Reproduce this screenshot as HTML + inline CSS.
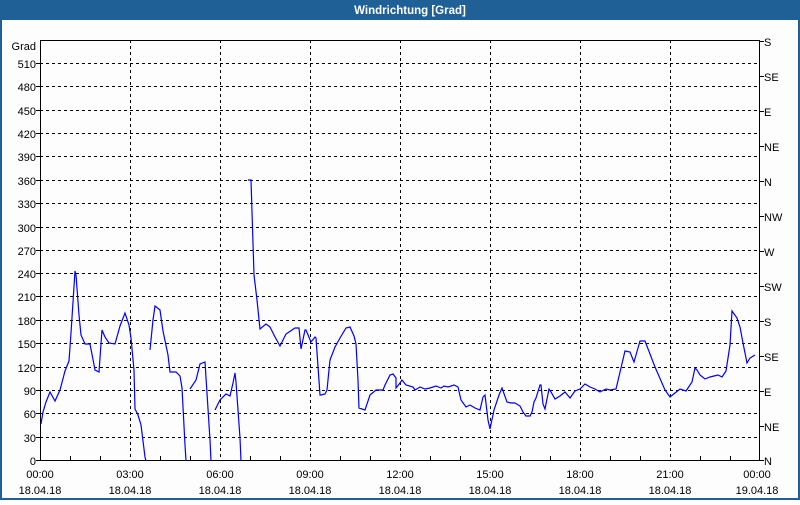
<!DOCTYPE html>
<html><head><meta charset="utf-8"><style>
body{margin:0;width:800px;height:500px;overflow:hidden;background:#fff;font-family:"Liberation Sans",sans-serif}
</style></head><body>
<svg width="800" height="500" xmlns="http://www.w3.org/2000/svg" font-family="Liberation Sans, sans-serif" font-size="11">
<rect x="0" y="0" width="800" height="500" fill="#1f6096"/>
<rect x="2" y="20" width="796" height="478" fill="#fdfdfd"/>
<text x="410" y="14" fill="#fff" font-weight="bold" text-anchor="middle" font-size="11.5">Windrichtung [Grad]</text>
<g stroke="#000" stroke-width="1" stroke-dasharray="3,3" shape-rendering="crispEdges">
<path d="M40 63.5H760M40 86.5H760M40 110.5H760M40 133.5H760M40 156.5H760M40 180.5H760M40 203.5H760M40 227.5H760M40 250.5H760M40 273.5H760M40 296.5H760M40 320.5H760M40 343.5H760M40 367.5H760M40 390.5H760M40 413.5H760M40 437.5H760"/>
<path d="M130.5 40V460M220.5 40V460M310.5 40V460M400.5 40V460M490.5 40V460M580.5 40V460M670.5 40V460"/>
</g>
<g stroke="#000" stroke-width="1" shape-rendering="crispEdges" fill="none">
<rect x="40.5" y="40.5" width="719" height="420"/>
<path d="M70.5 460v-4M100.5 460v-4M160.5 460v-4M190.5 460v-4M250.5 460v-4M280.5 460v-4M340.5 460v-4M370.5 460v-4M430.5 460v-4M460.5 460v-4M520.5 460v-4M550.5 460v-4M610.5 460v-4M640.5 460v-4M700.5 460v-4M730.5 460v-4"/>
<path d="M760 41.5h4M760 76.5h4M760 111.5h4M760 146.5h4M760 181.5h4M760 216.5h4M760 251.5h4M760 286.5h4M760 321.5h4M760 356.5h4M760 391.5h4M760 426.5h4M760 460.5h4"/>
<path d="M36 63.5h4M36 86.5h4M36 110.5h4M36 133.5h4M36 156.5h4M36 180.5h4M36 203.5h4M36 227.5h4M36 250.5h4M36 273.5h4M36 296.5h4M36 320.5h4M36 343.5h4M36 367.5h4M36 390.5h4M36 413.5h4M36 437.5h4M36 460.5h4"/>
</g>
<g fill="#000" text-anchor="end">
<text x="36" y="50">Grad</text>
<text x="36" y="68">510</text><text x="36" y="91">480</text><text x="36" y="115">450</text><text x="36" y="138">420</text><text x="36" y="161">390</text><text x="36" y="185">360</text><text x="36" y="208">330</text><text x="36" y="232">300</text><text x="36" y="255">270</text><text x="36" y="278">240</text><text x="36" y="301">210</text><text x="36" y="325">180</text><text x="36" y="348">150</text><text x="36" y="372">120</text><text x="36" y="395">90</text><text x="36" y="418">60</text><text x="36" y="442">30</text><text x="36" y="465">0</text>
</g>
<g fill="#000">
<text x="764" y="46">S</text><text x="764" y="81">SE</text><text x="764" y="116">E</text><text x="764" y="151">NE</text><text x="764" y="186">N</text><text x="764" y="221">NW</text><text x="764" y="256">W</text><text x="764" y="291">SW</text><text x="764" y="326">S</text><text x="764" y="361">SE</text><text x="764" y="396">E</text><text x="764" y="431">NE</text><text x="764" y="465">N</text>
</g>
<g fill="#000" text-anchor="middle">
<text x="40" y="478">00:00</text><text x="40" y="494">18.04.18</text>
<text x="130" y="478">03:00</text><text x="130" y="494">18.04.18</text>
<text x="220" y="478">06:00</text><text x="220" y="494">18.04.18</text>
<text x="310" y="478">09:00</text><text x="310" y="494">18.04.18</text>
<text x="400" y="478">12:00</text><text x="400" y="494">18.04.18</text>
<text x="490" y="478">15:00</text><text x="490" y="494">18.04.18</text>
<text x="580" y="478">18:00</text><text x="580" y="494">18.04.18</text>
<text x="670" y="478">21:00</text><text x="670" y="494">18.04.18</text>
<text x="757" y="478">00:00</text><text x="757" y="494">19.04.18</text>
</g>
<g stroke="#0000ff" stroke-width="1.2" fill="none">
<polyline points="41,424 43,412 46,402 50,392 55,401 60,390 65,371 69,361 71,333 75,271 76,275 79,315 81,335 85,344 90,344 95,370 99,372 102,330 105,337 109,343 115,344 120,326 125,313 129,325 131,338 134,370 135,409 138,415 141,425 145,457 146,461"/>
<polyline points="150,350 153,320 155,306 160,310 163,331 168,355 170,372 176,372 180,376 182,388 185,445 186,461"/>
<polyline points="190,389 196,380 200,364 205,362 210,440 211,461"/>
<polyline points="215,410 220,400 226,394 230,396 233,383 235,373 236,382 240,438 241,461"/>
<polyline points="248,180 251,180 254,275 257,300 260,329 266,324 270,327 275,337 280,346 286,334 292,330 295,328 299,328 301,349 305,330 306,330 311,342 315,337 316,338 320,395 321,395 325,394 327,390 330,360 335,347 340,338 346,328 350,327 354,336 356,344 358,380 359,408 365,410 370,395 376,390 383,390 385,385 386,383 390,375 393,374 396,378 396,388 400,383 402,380 406,385 413,387 415,390 420,387 425,389 430,388 436,386 441,388 444,386 448,387 454,385 458,387 461,400 466,407 470,405 475,408 480,410 483,397 485,395 488,420 490,429 494,410 499,395 502,388 507,402 511,403 515,403 520,406 523,412 526,416 530,416 532,412 534,402 536,398 540,385 541,385 543,404 545,409 549,389 551,392 555,399 560,396 565,392 570,398 575,391 580,389 585,384 590,387 595,389 600,392 606,389 610,390 616,389 625,351 630,352 634,362 640,341 645,341 655,367 665,390 670,397 675,393 680,389 686,391 692,382 695,368 697,370 700,375 705,379 710,377 718,375 722,377 726,371 730,345 732,311 737,318 740,327 743,343 747,363 750,358 755,355"/>
</g>
</svg>
</body></html>
